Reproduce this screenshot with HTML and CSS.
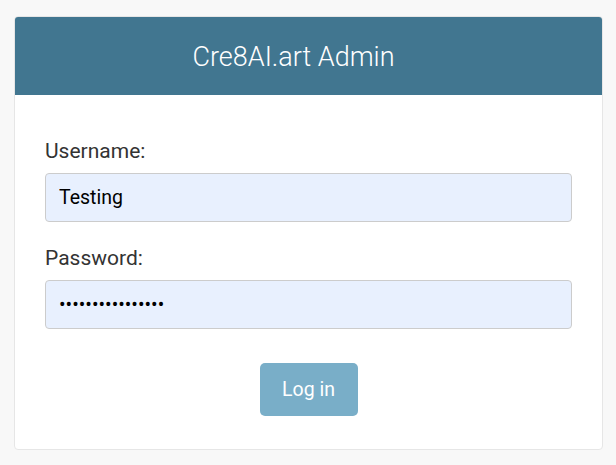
FILE: index.html
```html
<!DOCTYPE html>
<html lang="en">
<head>
<meta charset="utf-8">
<title>Log in | Cre8AI.art Admin</title>
<link rel="stylesheet" href="styles.css">
</head>
<body>
<div class="card">
  <div class="header">
    <h1 class="site-name">Cre8AI.art Admin</h1>
  </div>
  <form class="login-form" onsubmit="return false;">
    <div class="form-row">
      <label class="field-label" for="id_username">Username:</label>
      <input class="field-input" type="text" id="id_username" value="Testing">
    </div>
    <div class="form-row">
      <label class="field-label" for="id_password">Password:</label>
      <input class="field-input" type="password" id="id_password" value="abcdefghijklmnop">
    </div>
    <div class="submit-row">
      <button class="submit-btn" type="submit">Log in</button>
    </div>
  </form>
</div>
</body>
</html>
```
FILE: styles.css
```css
* {
  box-sizing: border-box;
}

html, body {
  margin: 0;
  padding: 0;
}

body {
  background: #f8f8f8;
  font-family: Roboto, "Liberation Sans", sans-serif;
  color: #333;
}

.card {
  width: 589px;
  margin: 16px 0 0 14px;
  background: #fff;
  border: 1px solid #e6e6e6;
  border-radius: 4px;
  overflow: hidden;
}

.header {
  height: 78px;
  background: #417690;
  display: flex;
  align-items: center;
  justify-content: center;
  padding-right: 30px;
}

.site-name {
  margin: 0;
  font-size: 27px;
  font-weight: 300;
  color: #fff;
  line-height: 1;
  padding-top: 3px;
}

.login-form {
  padding: 44px 30px 33px;
  display: flex;
  flex-direction: column;
}

.form-row {
  display: flex;
  flex-direction: column;
}

.form-row + .form-row {
  margin-top: 24px;
}

.field-label {
  font-size: 21px;
  line-height: 25px;
  color: #333;
  margin-bottom: 9px;
}

.field-input {
  height: 49px;
  width: 100%;
  border: 1px solid #ccc;
  border-radius: 4px;
  background: #e8f0fe;
  padding: 0 13px;
  font-family: Roboto, "Liberation Sans", sans-serif;
  font-size: 19.5px;
  color: #000;
  outline: none;
}

.submit-row {
  display: flex;
  justify-content: center;
  margin-top: 34px;
}

.submit-btn {
  width: 98px;
  height: 53px;
  background: #79aec8;
  color: #fff;
  border: none;
  border-radius: 5px;
  font-family: Roboto, "Liberation Sans", sans-serif;
  font-size: 19.5px;
  padding: 0;
  cursor: pointer;
}
```
